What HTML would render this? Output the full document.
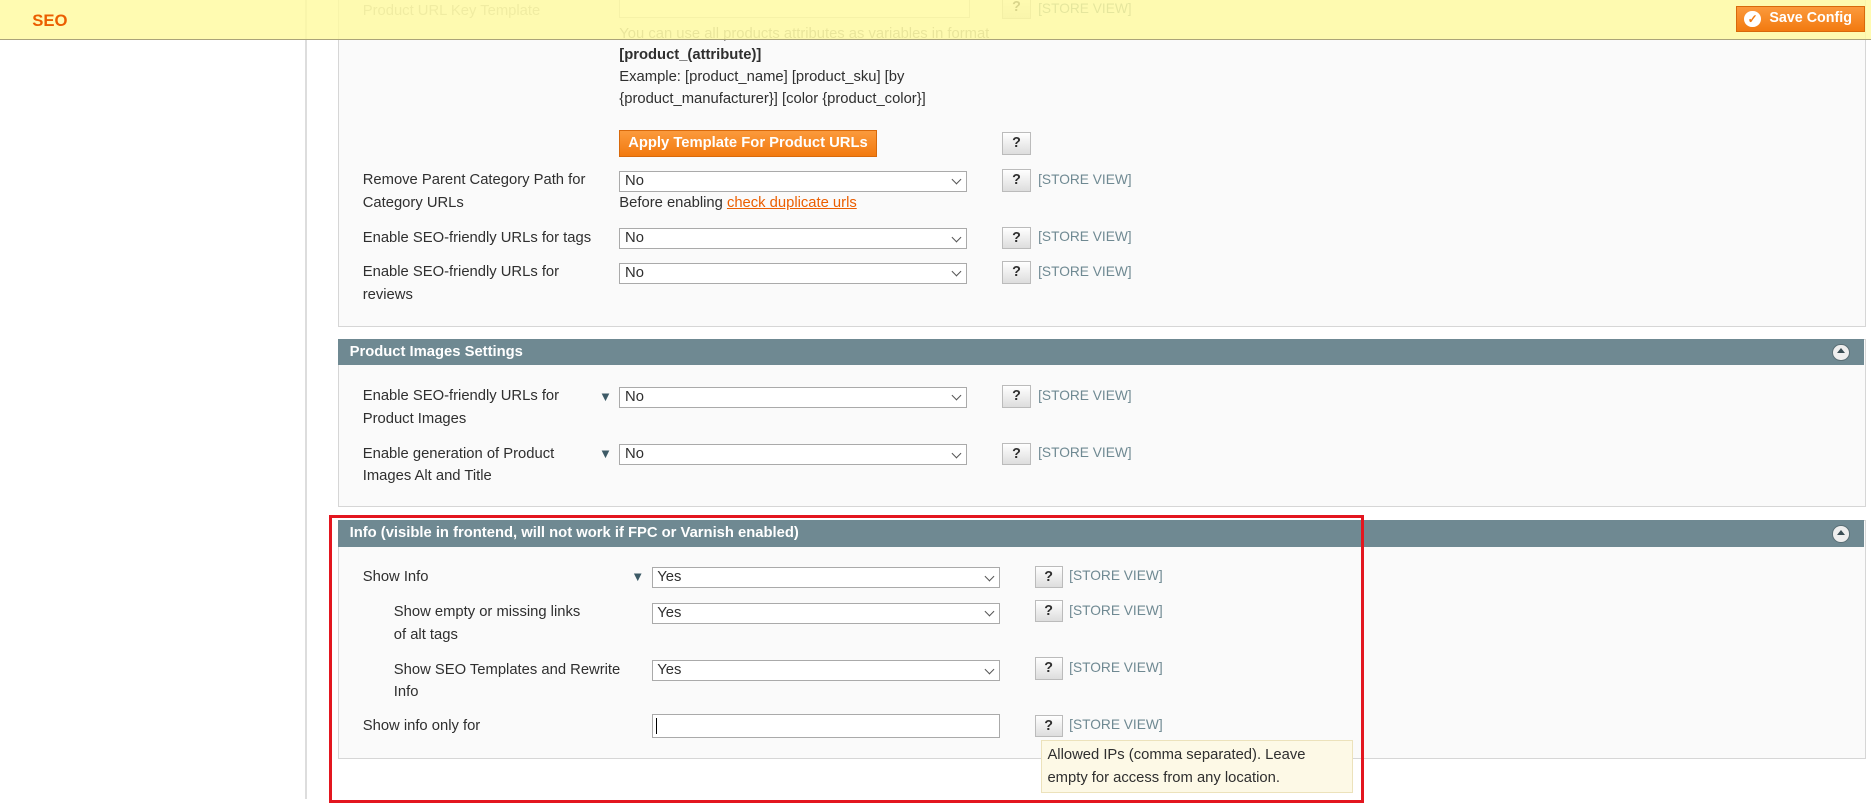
<!DOCTYPE html>
<html><head><meta charset="utf-8"><style>
html{zoom:1.19324}
body{margin:0;width:1568px;height:680px;overflow:hidden;background:#fff;font-family:"Liberation Sans",Arial,sans-serif;font-size:12.4px;color:#2f2f2f;position:relative}
.a{position:absolute}
.box{position:absolute;left:283px;width:1279px;background:#fafafa;border:1px solid #d6d6d6}
.hd{position:absolute;left:283px;width:1279px;height:22px;background:#6f8992;color:#fff;font-weight:bold;font-size:12.4px;line-height:22px;text-indent:10px}
.hd .c{position:absolute;right:12px;top:4px;width:13px;height:13px;border-radius:50%;background:#eee;border:1px solid #5a6f76}
.hd .c:after{content:"";position:absolute;left:3px;top:3px;border-left:3.5px solid transparent;border-right:3.5px solid transparent;border-bottom:5px solid #3a4d54}
.lb{position:absolute;line-height:19px;width:200px}
.sel{position:absolute;width:290px;height:16px;border:1px solid #aaa;background:#fff;line-height:16px;text-indent:4px}
.sel:after{content:"";position:absolute;right:5px;top:4px;width:5px;height:5px;border-right:1.3px solid #555;border-bottom:1.3px solid #555;transform:rotate(45deg)}
.q{position:absolute;width:22px;height:17px;border:1px solid #bbb;background:linear-gradient(#fff,#ddd);font-weight:bold;text-align:center;line-height:17px;font-size:12px}
.sv{position:absolute;color:#6f8992;font-size:11.5px}
.tri{position:absolute;color:#3d5a66;font-size:11px}
</style></head><body>
<div class="a" style="left:256px;top:0;width:1px;height:670px;background:#ddd"></div>
<div class="box" style="top:-5px;height:277px"></div>
<div class="lb" style="left:304px;top:0px;color:#aaa">Product URL Key Template</div>
<div class="a" style="left:519px;top:-3px;width:292px;height:16px;border:1px solid #ccc;background:#fff"></div>
<div class="q" style="left:840px;top:-3px">?</div><div class="sv" style="left:870px;top:1px">[STORE VIEW]</div>
<div class="lb" style="left:519px;top:19px;width:340px;color:#888">You can use all products attributes as variables in format</div>
<div class="lb" style="left:519px;top:37px;font-weight:bold">[product_(attribute)]</div>
<div class="lb" style="left:519px;top:55px;width:280px">Example: [product_name] [product_sku] [by {product_manufacturer}] [color {product_color}]</div>
<div class="a" style="left:519px;top:109px;width:214px;height:21px;background:linear-gradient(#fb9a3c,#f27a10);border:1px solid #d8690b;color:#fff;font-weight:bold;line-height:21px;text-align:center">Apply Template For Product URLs</div>
<div class="q" style="left:840px;top:111px">?</div>
<div class="lb" style="left:304px;top:142px;width:195px">Remove Parent Category Path for Category URLs</div>
<div class="sel" style="left:519px;top:143px">No</div>
<div class="lb" style="left:519px;top:161px;width:300px">Before enabling <span style="color:#eb5e00;text-decoration:underline">check duplicate urls</span></div>
<div class="q" style="left:840px;top:142px">?</div><div class="sv" style="left:870px;top:144px">[STORE VIEW]</div>
<div class="lb" style="left:304px;top:190px">Enable SEO-friendly URLs for tags</div>
<div class="sel" style="left:519px;top:191px">No</div>
<div class="q" style="left:840px;top:190px">?</div><div class="sv" style="left:870px;top:192px">[STORE VIEW]</div>
<div class="lb" style="left:304px;top:219px;width:175px">Enable SEO-friendly URLs for reviews</div>
<div class="sel" style="left:519px;top:220px">No</div>
<div class="q" style="left:840px;top:219px">?</div><div class="sv" style="left:870px;top:221px">[STORE VIEW]</div>

<div class="box" style="top:284px;height:139px"></div>
<div class="hd" style="top:284px">Product Images Settings<span class="c"></span></div>
<div class="lb" style="left:304px;top:323px;width:175px">Enable SEO-friendly URLs for Product Images</div>
<div class="tri" style="left:502px;top:326px">▼</div>
<div class="sel" style="left:519px;top:324px">No</div>
<div class="q" style="left:840px;top:323px">?</div><div class="sv" style="left:870px;top:325px">[STORE VIEW]</div>
<div class="lb" style="left:304px;top:371px;width:175px">Enable generation of Product Images Alt and Title</div>
<div class="tri" style="left:502px;top:374px">▼</div>
<div class="sel" style="left:519px;top:372px">No</div>
<div class="q" style="left:840px;top:371px">?</div><div class="sv" style="left:870px;top:373px">[STORE VIEW]</div>

<div class="box" style="top:436px;height:198px"></div>
<div class="hd" style="top:436px">Info (visible in frontend, will not work if FPC or Varnish enabled)<span class="c"></span></div>
<div class="lb" style="left:304px;top:474px">Show Info</div>
<div class="tri" style="left:529px;top:477px">▼</div>
<div class="sel" style="left:546px;top:475px">Yes</div>
<div class="q" style="left:867px;top:474px">?</div><div class="sv" style="left:896px;top:476px">[STORE VIEW]</div>
<div class="lb" style="left:330px;top:504px;width:162px">Show empty or missing links of alt tags</div>
<div class="sel" style="left:546px;top:505px">Yes</div>
<div class="q" style="left:867px;top:503px">?</div><div class="sv" style="left:896px;top:505px">[STORE VIEW]</div>
<div class="lb" style="left:330px;top:552px;width:195px">Show SEO Templates and Rewrite Info</div>
<div class="sel" style="left:546px;top:553px">Yes</div>
<div class="q" style="left:867px;top:551px">?</div><div class="sv" style="left:896px;top:553px">[STORE VIEW]</div>
<div class="lb" style="left:304px;top:599px">Show info only for</div>
<div class="a" style="left:546px;top:598px;width:290px;height:19px;border:1px solid #aaa;background:#fff"><div style="position:absolute;left:3px;top:3px;width:1px;height:13px;background:#000"></div></div>
<div class="q" style="left:867px;top:599px">?</div><div class="sv" style="left:896px;top:601px">[STORE VIEW]</div>
<div class="a" style="left:872px;top:620px;height:45px;background:#fdf9e6;border:1px solid #ece2bb;padding:3px 30px 0 5px;line-height:19px;box-sizing:border-box;width:262px">Allowed IPs (comma separated). Leave empty for access from any location.</div>
<div class="a" style="left:276px;top:432px;width:862px;height:236px;border:3px solid #e3161f"></div>

<div class="a" style="left:0;top:0;width:1568px;height:33px;background:rgba(255,250,160,.82);border-bottom:1px solid #aaa37a"></div>
<div class="a" style="left:27px;top:9px;color:#eb5e00;font-weight:bold;font-size:14px">SEO</div>
<div class="a" style="left:1455px;top:5px;width:106px;height:20px;background:linear-gradient(#fb9a3c,#f27a10);border:1px solid #d8690b;color:#fff;font-weight:bold;line-height:20px;font-size:12px"><span style="position:absolute;left:6px;top:3px;width:14px;height:14px;border-radius:50%;background:#fff;color:#f27a10;font-size:10px;line-height:14px;text-align:center">✓</span><span style="position:absolute;left:27px">Save Config</span></div>
</body></html>
